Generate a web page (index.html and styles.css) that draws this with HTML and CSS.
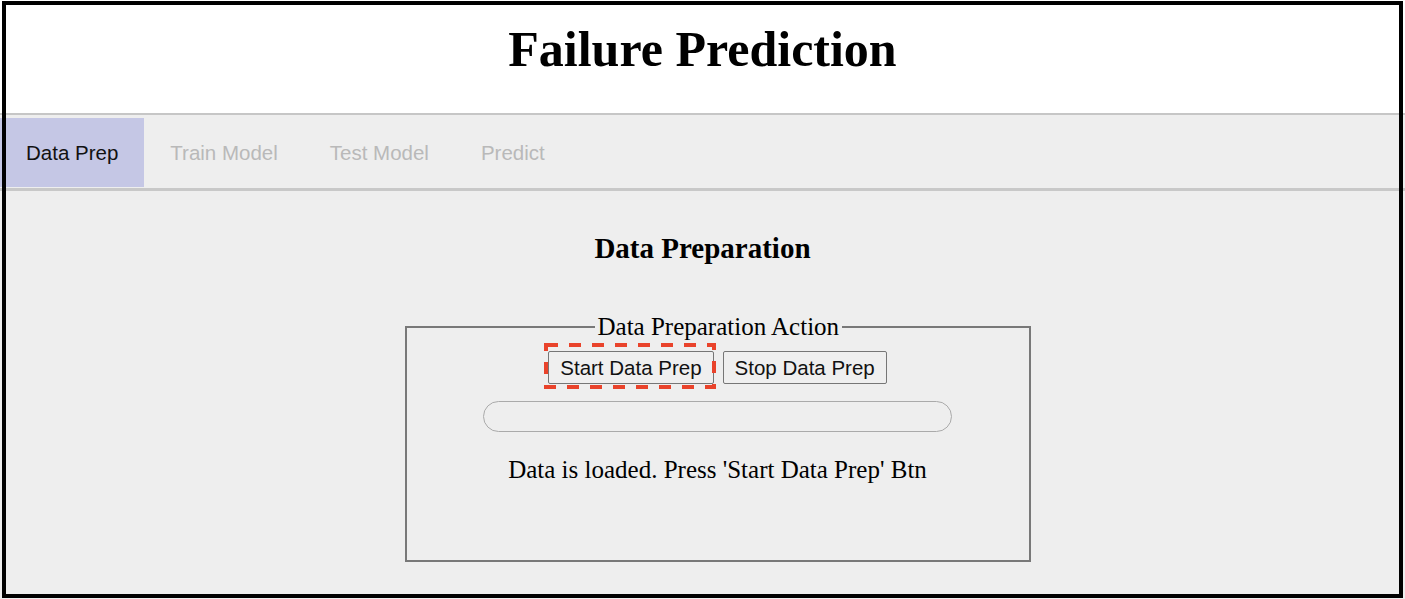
FILE: index.html
```html
<!DOCTYPE html>
<html lang="en">
<head>
<meta charset="utf-8">
<title>Failure Prediction</title>
<link rel="stylesheet" href="styles.css">
</head>
<body>
  <header class="header">
    <h1 class="title">Failure Prediction</h1>
  </header>
  <nav class="nav">
    <div class="tab active">Data Prep</div>
    <div class="tab">Train Model</div>
    <div class="tab">Test Model</div>
    <div class="tab">Predict</div>
  </nav>
  <main class="content">
    <h2 class="section-title">Data Preparation</h2>
    <div class="panel">
      <fieldset class="action-box">
        <legend class="action-legend">Data Preparation Action</legend>
        <div class="btn-row">
          <span class="mark">
            <button class="btn" type="button">Start Data Prep</button>
            <svg class="mark-svg" width="172" height="46" viewBox="0 0 172 46" aria-hidden="true">
              <rect x="2" y="2" width="168" height="42" fill="none" stroke="#e9432b" stroke-width="4" stroke-dasharray="12 11"/>
            </svg>
          </span>
          <button class="btn" type="button">Stop Data Prep</button>
        </div>
        <div class="progress"></div>
        <p class="status">Data is loaded. Press 'Start Data Prep' Btn</p>
      </fieldset>
    </div>
  </main>
  <div class="frame"></div>
</body>
</html>
```
FILE: styles.css
```css
html, body {
  margin: 0;
  padding: 0;
}
body {
  background: #eeeeee;
  font-family: "Liberation Serif", "Times New Roman", serif;
  color: #000;
  height: 599px;
  overflow: hidden;
}
.header {
  background: #ffffff;
  height: 113px;
  box-sizing: border-box;
  padding-top: 21px;
}
.title {
  margin: 0;
  font-size: 50px;
  line-height: 57px;
  font-weight: bold;
  text-align: center;
}
.nav {
  display: flex;
  border-top: 2px solid #c6c6c6;
  border-bottom: 3px solid #c8c8c8;
  padding: 3px 0 1px;
  background: #eeeeee;
}
.tab {
  font-family: "Liberation Sans", Arial, sans-serif;
  font-size: 20.5px;
  height: 69px;
  line-height: 69px;
  padding: 0 26px;
  color: #b9b9b9;
}
.tab.active {
  background: #c5c7e5;
  color: #111111;
}
.section-title {
  margin: 41px 0 0;
  font-size: 29px;
  line-height: 33px;
  font-weight: bold;
  text-align: center;
}
.panel {
  margin-top: 47px;
  padding-left: 30px;
}
.action-box {
  box-sizing: border-box;
  width: 626px;
  height: 250px;
  margin: 0 auto;
  padding: 0;
  border: 2px solid #787878;
}
.action-legend {
  font-size: 25px;
  line-height: 29px;
  padding: 0 3px;
  margin-left: 188px;
}
.btn-row {
  display: flex;
  justify-content: center;
  gap: 9px;
  margin-top: 10px;
}
.mark {
  position: relative;
  display: inline-flex;
}
.mark-svg {
  position: absolute;
  left: -4px;
  top: -8px;
}
.btn {
  font-family: "Liberation Sans", Arial, sans-serif;
  font-size: 20.5px;
  height: 33px;
  padding: 0 11px;
  margin: 0;
  color: #111;
  background: #efefef;
  border: 1px solid #767676;
  border-radius: 2px;
}
.progress {
  box-sizing: border-box;
  width: 469px;
  height: 31px;
  margin: 17px auto 0;
  border: 1px solid #aaaaaa;
  border-radius: 16px;
  background: #eeeeee;
}
.status {
  margin: 23px 0 0;
  font-size: 25px;
  line-height: 29px;
  text-align: center;
}
.frame {
  position: fixed;
  left: 2px;
  top: 1px;
  right: 2px;
  bottom: 1px;
  border: 4px solid #000;
  pointer-events: none;
}
```
